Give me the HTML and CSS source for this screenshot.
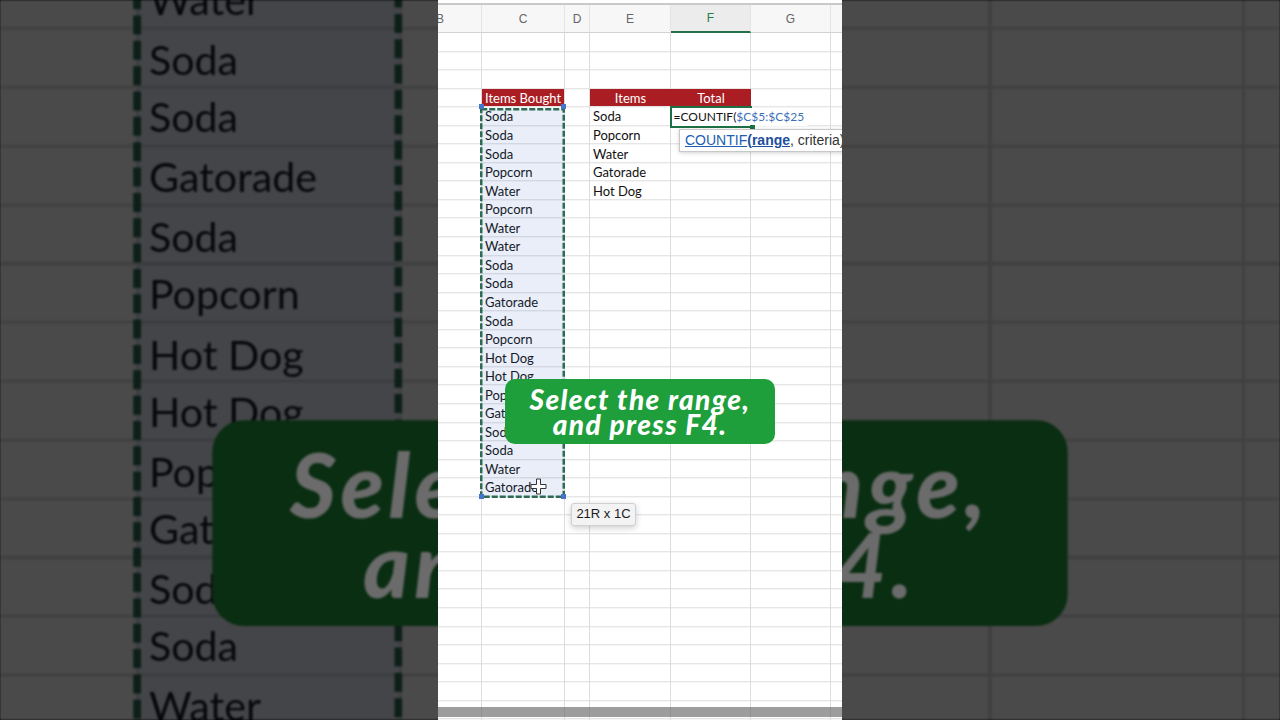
FILE: index.html
```html
<!DOCTYPE html>
<html lang="en">
<head>
  <meta charset="UTF-8">
  <meta name="viewport" content="width=device-width, initial-scale=1.0">
  <title>COUNTIF - Select the range</title>
  <link rel="stylesheet" href="styles.css">
</head>
<body>
  <!-- blown up copy of the frame behind the video -->
  <div class="backdrop" id="backdrop"></div>

  <div class="frame">
    <div class="sheet">
      <div class="hdr">B</div>
      <div class="hdr">C</div>
      <div class="hdr">D</div>
      <div class="hdr">E</div>
      <div class="hdr hdr-active">F</div>
      <div class="hdr">G</div>
      <div class="hdr">H</div>

      <div class="red red-c">Items Bought</div>
      <div class="red red-e">Items</div>
      <div class="red red-f">Total</div>

      <div class="list list-c">
        <div class="cell">Soda</div>
        <div class="cell">Soda</div>
        <div class="cell">Soda</div>
        <div class="cell">Popcorn</div>
        <div class="cell">Water</div>
        <div class="cell">Popcorn</div>
        <div class="cell">Water</div>
        <div class="cell">Water</div>
        <div class="cell">Soda</div>
        <div class="cell">Soda</div>
        <div class="cell">Gatorade</div>
        <div class="cell">Soda</div>
        <div class="cell">Popcorn</div>
        <div class="cell">Hot Dog</div>
        <div class="cell">Hot Dog</div>
        <div class="cell">Popcorn</div>
        <div class="cell">Gatorade</div>
        <div class="cell">Soda</div>
        <div class="cell">Soda</div>
        <div class="cell">Water</div>
        <div class="cell">Gatorade</div>
      </div>

      <div class="list list-e">
        <div class="cell">Soda</div>
        <div class="cell">Popcorn</div>
        <div class="cell">Water</div>
        <div class="cell">Gatorade</div>
        <div class="cell">Hot Dog</div>
      </div>
    </div>

    <!-- marching ants round C5:C25 -->
    <div class="selection">
      <svg class="ants" width="85" height="390" viewBox="0 0 85 390">
        <rect x="1.25" y="1.25" width="82.5" height="387.5" fill="rgba(51,102,187,0.11)" stroke="#2d6b55" stroke-width="2.5" stroke-dasharray="6 2"/>
      </svg>
      <span class="handle handle-tl"></span>
      <span class="handle handle-tr"></span>
      <span class="handle handle-bl"></span>
      <span class="handle handle-br"></span>
    </div>

    <div class="editor">
      <span class="formula">=COUNTIF(<span class="ref">$C$5:$C$25</span></span>
      <span class="fill-handle"></span>
    </div>

    <div class="hint">
      <span class="fn">COUNTIF</span><span class="paren">(</span><span class="arg">range</span>, criteria)
    </div>

    <div class="size-tip">21R x 1C</div>

    <svg class="cursor" width="17" height="17" viewBox="0 0 17 17">
      <polygon points="6.5,1 10.5,1 10.5,6.5 16,6.5 16,10.5 10.5,10.5 10.5,16 6.5,16 6.5,10.5 1,10.5 1,6.5 6.5,6.5" fill="#fff" stroke="#333" stroke-width="1"/>
    </svg>

    <div class="caption">
      <span>Select the range,</span>
      <span>and press F4.</span>
    </div>

    <div class="scrollbar"></div>
  </div>

  <script>
    // the player fills the sides with the same frame, zoomed and dimmed
    const frame = document.querySelector(".frame");
    const copy = frame.cloneNode(true);
    copy.classList.add("frame-copy");
    document.getElementById("backdrop").appendChild(copy);
  </script>
</body>
</html>
```

FILE: styles.css
```css
body {
  margin: 0;
  width: 1280px;
  height: 720px;
  display: flex;
  justify-content: center;
  background-color: #000;
  overflow: hidden;
  position: relative;
}

.backdrop {
  position: absolute;
  inset: 0;
  display: flex;
  justify-content: center;
  align-items: center;
  overflow: hidden;
  filter: blur(1px);
}

.frame {
  position: relative;
  z-index: 1;
  flex-shrink: 0;
  width: 404px;
  height: 720px;
  padding-top: 3px;
  box-sizing: border-box;
  overflow: hidden;
  background-color: #fff;
  font-family: Lato, "Noto Sans", sans-serif;
}

/* zoomed copy: dimmed by a layer, caption kept a bit brighter */
.frame-copy {
  transform: scale(3.168);
}

.frame-copy::after {
  content: "";
  position: absolute;
  inset: 0;
  z-index: 5;
  background-color: rgba(0, 0, 0, 0.71);
}

.frame-copy .caption {
  z-index: 6;
  background-color: #0a2e12;
  color: #6b6b6b;
}

/* Sheet grid */
.sheet {
  display: grid;
  grid-template-columns: 83px 83px 25px 81px 80px 80px 80px;
  grid-template-rows: 28.3px repeat(37, 18.55px);
  margin-left: -39px;
  border-top: 2px solid #c9c9c9;
  background:
    linear-gradient(to right,
      transparent 82px, #dcdcdc 82px 83px,
      transparent 83px 165px, #dcdcdc 165px 166px,
      transparent 166px 190px, #dcdcdc 190px 191px,
      transparent 191px 271px, #dcdcdc 271px 272px,
      transparent 272px 351px, #dcdcdc 351px 352px,
      transparent 352px 431px, #dcdcdc 431px 432px,
      transparent 432px 511px, #dcdcdc 511px 512px,
      transparent 512px),
    repeating-linear-gradient(to bottom, transparent 0 17.55px, #dcdcdc 17.55px 18.55px) 0 28.3px;
}

.hdr {
  grid-row: 1;
  display: flex;
  align-items: center;
  justify-content: center;
  background-color: #f7f7f7;
  border-right: 1px solid #e4e4e4;
  border-bottom: 1px solid #d2d2d2;
  font-family: "Liberation Sans", Arial, sans-serif;
  font-size: 12px;
  color: #666;
}

.hdr-active {
  background-color: #ececec;
  color: #2a7a4c;
  border-bottom: 2.5px solid #24704a;
}

.red {
  margin-bottom: 1px;
  background-color: #aa1d23;
  color: #fff;
  font-size: 13px;
  line-height: 19px;
  text-align: center;
  grid-row: 5;
  overflow: hidden;
}

.red-c { grid-column: 2; margin-right: 1px; }
.red-e { grid-column: 4; }
.red-f { grid-column: 5; }

.list {
  display: flex;
  flex-direction: column;
}

.list-c { grid-column: 2; grid-row: 6 / span 21; }
.list-e { grid-column: 4; grid-row: 6 / span 5; }

.cell {
  height: 18.55px;
  line-height: 19.5px;
  padding-left: 3px;
  font-size: 13px;
  color: #111;
  white-space: nowrap;
}

/* Selection and edit overlays */
.selection {
  position: absolute;
  left: 42px;
  top: 108px;
  width: 85px;
  height: 390px;
}

.ants {
  display: block;
}

.handle {
  position: absolute;
  width: 5px;
  height: 5px;
  background-color: #4674c6;
}

.handle-tl { left: -1px; top: -4px; }
.handle-tr { left: 81px; top: -4px; }
.handle-bl { left: -1px; top: 386px; }
.handle-br { left: 81px; top: 386px; }

.editor {
  position: absolute;
  left: 232px;
  top: 106.3px;
  width: 80px;
  height: 18px;
  border: 2px solid #1e7145;
  border-right: none;
  line-height: 18px;
  white-space: nowrap;
}

.formula {
  display: inline-block;
  vertical-align: top;
  padding: 0 4px 0 1.5px;
  background-color: #fff;
  font-size: 12px;
  line-height: 18px;
  color: #111;
}

.ref {
  color: #3b6fb8;
}

.fill-handle {
  position: absolute;
  right: -3px;
  bottom: -3.5px;
  width: 5px;
  height: 5px;
  background-color: #1e7145;
}

.hint {
  position: absolute;
  left: 241px;
  top: 129.3px;
  height: 21px;
  padding: 0 20px 0 5px;
  background-color: #fff;
  border: 1px solid #c8c8c8;
  box-shadow: 0 1px 4px rgba(0, 0, 0, 0.18);
  font-family: "Liberation Sans", Arial, sans-serif;
  font-size: 14px;
  line-height: 21px;
  color: #333;
  white-space: nowrap;
}

.fn {
  color: #2160b0;
  text-decoration: underline;
}

.paren {
  color: #1d4f9c;
  font-weight: bold;
}

.arg {
  color: #1d4f9c;
  font-weight: bold;
  text-decoration: underline;
}

.size-tip {
  position: absolute;
  left: 132.7px;
  top: 503.3px;
  width: 65.6px;
  height: 22.7px;
  box-sizing: border-box;
  background-color: #f3f3f3;
  border: 1px solid #d0d0d0;
  border-radius: 3px;
  box-shadow: 0 2px 6px rgba(0, 0, 0, 0.2);
  font-family: "Liberation Sans", Arial, sans-serif;
  font-size: 13px;
  line-height: 20.7px;
  text-align: center;
  color: #1a1a1a;
}

.cursor {
  position: absolute;
  left: 92px;
  top: 478px;
}

/* Video caption */
.caption {
  position: absolute;
  left: 67px;
  top: 379px;
  width: 270px;
  height: 65px;
  display: flex;
  flex-direction: column;
  align-items: center;
  justify-content: center;
  background-color: #1f9e3c;
  border-radius: 10px;
  font-size: 28px;
  font-weight: 900;
  font-style: italic;
  letter-spacing: 1.4px;
  line-height: 25px;
  color: #fff;
  white-space: nowrap;
}

.scrollbar {
  position: absolute;
  left: 0;
  right: 0;
  top: 707px;
  height: 9.5px;
  background-color: rgba(110, 110, 110, 0.68);
}
```
